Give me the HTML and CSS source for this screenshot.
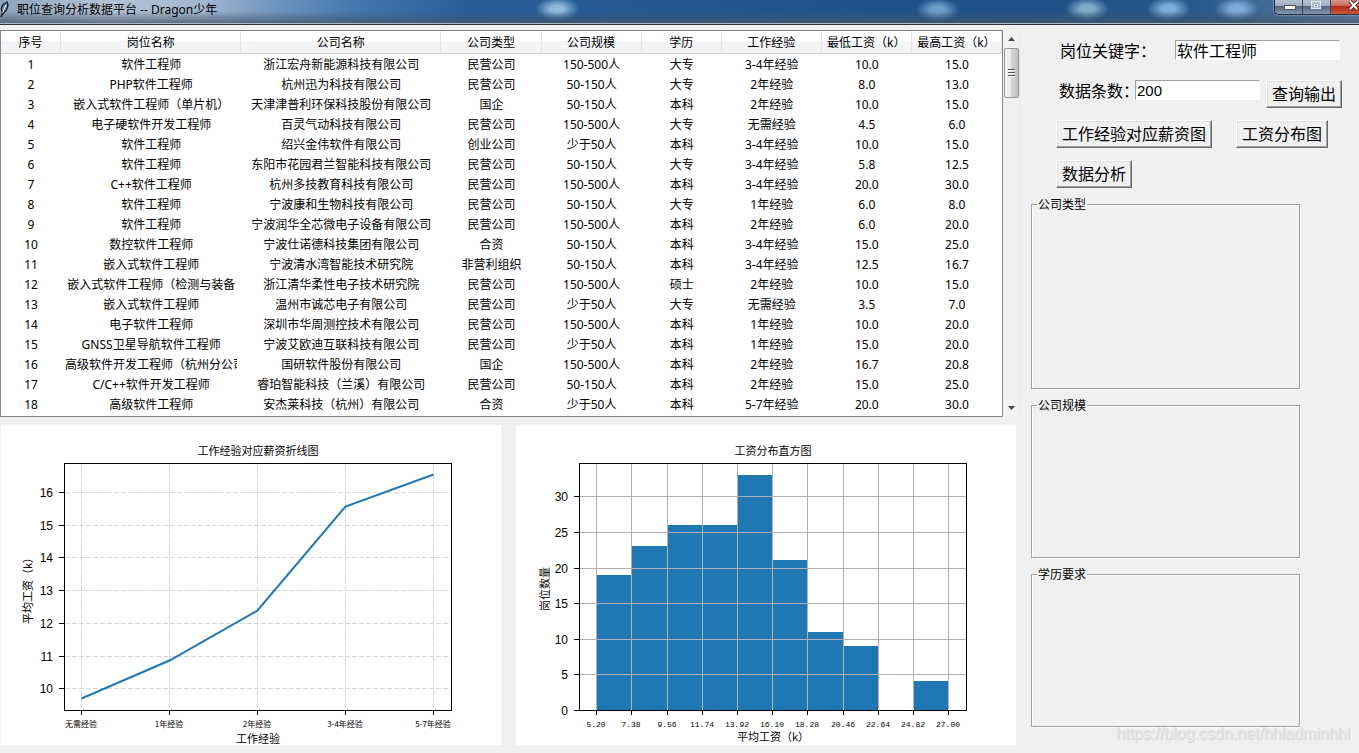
FILE: index.html
```
<!DOCTYPE html>
<html lang="zh-CN">
<head>
  <meta charset="UTF-8" />
  <meta name="viewport" content="width=device-width, initial-scale=1" />
  <title>职位查询分析数据平台 -- Dragon少年</title>
  <link rel="stylesheet" href="styles.css">
</head>
<body>

  <!-- 标题栏 -->
  <header class="titlebar">
    <svg class="feather" viewBox="0 0 10 18" aria-hidden="true">
      <path d="M1 17 L2.500 12 C0 9 2 4 7 2 C9 5 7.500 10 3.500 13 Z" fill="#5b8fc4" stroke="#111" stroke-width="1.200" />
      <path d="M2.500 13 L6 5" stroke="#fff" stroke-width="1" />
    </svg>
    <h1>职位查询分析数据平台 -- Dragon少年</h1>
    <div class="window-buttons">
      <button type="button" class="win-btn" aria-label="最小化">
        <svg viewBox="0 0 28 14"><rect x="9.500" y="5.500" width="11" height="4" fill="#fff" stroke="#4b5360" /></svg>
      </button>
      <button type="button" class="win-btn" aria-label="最大化">
        <svg viewBox="0 0 28 14"><rect x="8.500" y="1.500" width="9" height="7" fill="#aebccb" stroke="#dfe7ef" /><rect x="11.500" y="4.500" width="3" height="2" fill="#5b7695" stroke="#dfe7ef" /></svg>
      </button>
      <button type="button" class="win-btn close" aria-label="关闭">
        <svg viewBox="0 0 28 14"><path d="M19 1 L26 9 M27 1 L19 9" stroke="#4a2020" stroke-width="4" /><path d="M19 1 L26 9 M27 1 L19 9" stroke="#fff" stroke-width="2" /></svg>
      </button>
    </div>
  </header>

  <main class="app">
    <section class="left">

      <!-- 职位列表 -->
      <div class="list">
        <div class="table-box">
          <table>
            <colgroup>
              <col class="w60"><col class="w180"><col class="w200"><col class="w100"><col class="w100"><col class="w80"><col class="w100"><col class="w90"><col class="w90">
            </colgroup>
            <thead>
              <tr><th>序号</th><th>岗位名称</th><th>公司名称</th><th>公司类型</th><th>公司规模</th><th>学历</th><th>工作经验</th><th>最低工资（k）</th><th>最高工资（k）</th></tr>
            </thead>
            <tbody>
              <tr><td>1</td><td>软件工程师</td><td>浙江宏舟新能源科技有限公司</td><td>民营公司</td><td>150-500人</td><td>大专</td><td>3-4年经验</td><td>10.0</td><td>15.0</td></tr>
              <tr><td>2</td><td>PHP软件工程师</td><td>杭州迅为科技有限公司</td><td>民营公司</td><td>50-150人</td><td>大专</td><td>2年经验</td><td>8.0</td><td>13.0</td></tr>
              <tr><td>3</td><td>嵌入式软件工程师（单片机）</td><td>天津津普利环保科技股份有限公司</td><td>国企</td><td>50-150人</td><td>本科</td><td>2年经验</td><td>10.0</td><td>15.0</td></tr>
              <tr><td>4</td><td>电子硬软件开发工程师</td><td>百灵气动科技有限公司</td><td>民营公司</td><td>150-500人</td><td>大专</td><td>无需经验</td><td>4.5</td><td>6.0</td></tr>
              <tr><td>5</td><td>软件工程师</td><td>绍兴金伟软件有限公司</td><td>创业公司</td><td>少于50人</td><td>本科</td><td>3-4年经验</td><td>10.0</td><td>15.0</td></tr>
              <tr><td>6</td><td>软件工程师</td><td>东阳市花园君兰智能科技有限公司</td><td>民营公司</td><td>50-150人</td><td>大专</td><td>3-4年经验</td><td>5.8</td><td>12.5</td></tr>
              <tr><td>7</td><td>C++软件工程师</td><td>杭州多技教育科技有限公司</td><td>民营公司</td><td>150-500人</td><td>本科</td><td>3-4年经验</td><td>20.0</td><td>30.0</td></tr>
              <tr><td>8</td><td>软件工程师</td><td>宁波康和生物科技有限公司</td><td>民营公司</td><td>50-150人</td><td>大专</td><td>1年经验</td><td>6.0</td><td>8.0</td></tr>
              <tr><td>9</td><td>软件工程师</td><td>宁波润华全芯微电子设备有限公司</td><td>民营公司</td><td>150-500人</td><td>本科</td><td>2年经验</td><td>6.0</td><td>20.0</td></tr>
              <tr><td>10</td><td>数控软件工程师</td><td>宁波仕诺德科技集团有限公司</td><td>合资</td><td>50-150人</td><td>本科</td><td>3-4年经验</td><td>15.0</td><td>25.0</td></tr>
              <tr><td>11</td><td>嵌入式软件工程师</td><td>宁波清水湾智能技术研究院</td><td>非营利组织</td><td>50-150人</td><td>本科</td><td>3-4年经验</td><td>12.5</td><td>16.7</td></tr>
              <tr><td>12</td><td>嵌入式软件工程师（检测与装备</td><td>浙江清华柔性电子技术研究院</td><td>民营公司</td><td>150-500人</td><td>硕士</td><td>2年经验</td><td>10.0</td><td>15.0</td></tr>
              <tr><td>13</td><td>嵌入式软件工程师</td><td>温州市诚芯电子有限公司</td><td>民营公司</td><td>少于50人</td><td>大专</td><td>无需经验</td><td>3.5</td><td>7.0</td></tr>
              <tr><td>14</td><td>电子软件工程师</td><td>深圳市华周测控技术有限公司</td><td>民营公司</td><td>150-500人</td><td>本科</td><td>1年经验</td><td>10.0</td><td>20.0</td></tr>
              <tr><td>15</td><td>GNSS卫星导航软件工程师</td><td>宁波艾欧迪互联科技有限公司</td><td>民营公司</td><td>少于50人</td><td>本科</td><td>1年经验</td><td>15.0</td><td>20.0</td></tr>
              <tr><td>16</td><td>高级软件开发工程师（杭州分公司</td><td>国研软件股份有限公司</td><td>国企</td><td>150-500人</td><td>本科</td><td>2年经验</td><td>16.7</td><td>20.8</td></tr>
              <tr><td>17</td><td>C/C++软件开发工程师</td><td>睿珀智能科技（兰溪）有限公司</td><td>民营公司</td><td>50-150人</td><td>本科</td><td>2年经验</td><td>15.0</td><td>25.0</td></tr>
              <tr><td>18</td><td>高级软件工程师</td><td>安杰莱科技（杭州）有限公司</td><td>合资</td><td>少于50人</td><td>本科</td><td>5-7年经验</td><td>20.0</td><td>30.0</td></tr>
            </tbody>
          </table>
        </div>
        <div class="scrollbar">
          <button type="button" class="arrow" aria-label="向上滚动"><svg viewBox="0 0 7 4"><path d="M0 4 L3.500 0 L7 4 Z" fill="#444" /></svg></button>
          <div class="thumb"><i></i><i></i><i></i></div>
          <div class="track"></div>
          <button type="button" class="arrow" aria-label="向下滚动"><svg viewBox="0 0 7 4"><path d="M0 0 L3.500 4 L7 0 Z" fill="#444" /></svg></button>
        </div>
      </div>

      <!-- 图表 -->
      <div class="charts">
        <svg class="chart" viewBox="0 0 500 320" role="img" aria-label="工作经验对应薪资折线图">
          <text class="title" x="257" y="30">工作经验对应薪资折线图</text>
          <path class="grid dashed" d="M80.500 285V39 M168.500 285V39 M256.500 285V39 M344.500 285V39 M432.500 285V39 M64 67.500H450 M64 100.500H450 M64 132.500H450 M64 165.500H450 M64 198.500H450 M64 231.500H450 M64 263.500H450" />
          <polyline class="line" points="80.500,273.500 168.500,235.500 256.500,185.500 344.500,81.500 432.500,49.500" />
          <path class="axis" d="M63.500 38.500H450.500V285.500H63.500Z M80.500 286v4 M168.500 286v4 M256.500 286v4 M344.500 286v4 M432.500 286v4 M63 67.500h-5 M63 100.500h-5 M63 132.500h-5 M63 165.500h-5 M63 198.500h-5 M63 231.500h-5 M63 263.500h-5" />
          <g class="y-ticks">
            <text x="52" y="72">16</text>
            <text x="52" y="105">15</text>
            <text x="52" y="137">14</text>
            <text x="52" y="170">13</text>
            <text x="52" y="203">12</text>
            <text x="52" y="236">11</text>
            <text x="52" y="268">10</text>
          </g>
          <g class="x-ticks">
            <text x="80" y="302">无需经验</text>
            <text x="168" y="302">1年经验</text>
            <text x="256" y="302">2年经验</text>
            <text x="344" y="302">3-4年经验</text>
            <text x="432" y="302">5-7年经验</text>
          </g>
          <text class="title" x="257" y="318">工作经验</text>
          <text class="title" transform="translate(31 163) rotate(-90)">平均工资（k）</text>
        </svg>

        <svg class="chart" viewBox="0 0 500 320" role="img" aria-label="工资分布直方图">
          <text class="title" x="257" y="30">工资分布直方图</text>
          <path class="bars" d="M81 285V150H116V121H152V100H222V50H257V135H292V207H328V221H363V285Z M398 285V256H432V285Z" />
          <path class="grid" d="M80.500 285V39 M115.500 285V39 M151.500 285V39 M186.500 285V39 M221.500 285V39 M256.500 285V39 M291.500 285V39 M327.500 285V39 M362.500 285V39 M397.500 285V39 M432.500 285V39 M64 71.500H450 M64 107.500H450 M64 143.500H450 M64 178.500H450 M64 214.500H450 M64 249.500H450" />
          <path class="axis" d="M63.500 38.500H450.500V285.500H63.500Z M80.500 286v4 M115.500 286v4 M151.500 286v4 M186.500 286v4 M221.500 286v4 M256.500 286v4 M291.500 286v4 M327.500 286v4 M362.500 286v4 M397.500 286v4 M432.500 286v4 M63 71.500h-5 M63 107.500h-5 M63 143.500h-5 M63 178.500h-5 M63 214.500h-5 M63 249.500h-5 M63 285.500h-5" />
          <g class="y-ticks">
            <text x="52" y="76">30</text>
            <text x="52" y="112">25</text>
            <text x="52" y="148">20</text>
            <text x="52" y="183">15</text>
            <text x="52" y="219">10</text>
            <text x="52" y="254">5</text>
            <text x="52" y="290">0</text>
          </g>
          <g class="x-ticks mono">
            <text x="80" y="302">5.20</text>
            <text x="115" y="302">7.38</text>
            <text x="151" y="302">9.56</text>
            <text x="186" y="302">11.74</text>
            <text x="221" y="302">13.92</text>
            <text x="256" y="302">16.10</text>
            <text x="291" y="302">18.28</text>
            <text x="327" y="302">20.46</text>
            <text x="362" y="302">22.64</text>
            <text x="397" y="302">24.82</text>
            <text x="432" y="302">27.00</text>
          </g>
          <text class="title" x="257" y="316">平均工资（k）</text>
          <text class="title" transform="translate(33 164) rotate(-90)">岗位数量</text>
        </svg>
      </div>
    </section>

    <!-- 查询面板 -->
    <aside class="right">
      <form class="query">
        <div class="row">
          <label class="keyword-label" for="keyword">岗位关键字：</label>
          <input class="keyword" id="keyword" type="text" value="软件工程师">
        </div>
        <div class="row">
          <label class="count-label" for="count">数据条数：</label>
          <input class="count" id="count" type="text" value="200">
          <button class="tk-btn" type="button">查询输出</button>
        </div>
        <div class="row spaced">
          <button class="tk-btn" type="button">工作经验对应薪资图</button>
          <button class="tk-btn" type="button">工资分布图</button>
        </div>
        <div class="row">
          <button class="tk-btn" type="button">数据分析</button>
        </div>
      </form>

      <div class="groups">
        <fieldset class="tall"><legend>公司类型</legend></fieldset>
        <fieldset><legend>公司规模</legend></fieldset>
        <fieldset><legend>学历要求</legend></fieldset>
      </div>
    </aside>
  </main>

  <div class="watermark">https://blog.csdn.net/hhladminhhl</div>
</body>
</html>
```
FILE: styles.css
```
* {
  box-sizing: border-box;
}

body {
  margin: 0;
  position: relative;
  background: #f0f0f0;
  color: #000;
  font-family: "Noto Sans", "Noto Sans CJK SC", sans-serif;
  font-size: 12px;
}

/* 标题栏 */
.titlebar {
  display: flex;
  align-items: flex-start;
  height: 25px;
  border-bottom: 1px solid #2b3340;
  box-shadow: inset 0 -1px #a9b9ca;
  background:
    linear-gradient(to bottom, rgba(70, 85, 105, 0) 45%, rgba(70, 85, 105, 0.8)),
    radial-gradient(ellipse 22px 12px at 41% 9px, #8fb9dc 30%, transparent),
    radial-gradient(ellipse 22px 12px at 69% 10px, #6f9dcb 30%, transparent),
    radial-gradient(ellipse 22px 12px at 80% 9px, #82acc8 30%, transparent),
    radial-gradient(ellipse 22px 12px at 86% 9px, #7fabda 30%, transparent),
    radial-gradient(ellipse 22px 12px at 91% 9px, #7fabda 30%, transparent),
    linear-gradient(to right, #8ea5bd 0, #b3c3d4 8%, #a0b6ce 15%, #7196bf 20%, #4677ae 26%, #285f9a 34%, #24568f 50%, #1f4f86 75%, #27578c 88%, #6482a3 100%);
}

.feather {
  width: 10px;
  height: 18px;
}

.titlebar h1 {
  flex: 1;
  margin: 0;
  padding-left: 7px;
  font-size: 12px;
  font-weight: normal;
  line-height: 20px;
}

.window-buttons {
  display: flex;
  height: 15px;
  border: 1px solid #27303d;
  border-top: 0;
  border-right: 0;
  border-radius: 0 0 0 5px;
  overflow: hidden;
  box-shadow: 0 0 2px #c9d6e4;
}

.win-btn {
  width: 28px;
  padding: 0;
  border: 0;
  border-right: 1px solid #3a4656;
  background: linear-gradient(to bottom, #b4c1cf 0, #9fafc1 40%, #52677f 45%, #8297ad);
}

.win-btn.close {
  border-right: 0;
  background: linear-gradient(to bottom, #d99a8e 0, #cc6a58 40%, #b02d16 45%, #c9573c);
}

.win-btn svg {
  display: block;
  width: 28px;
  height: 14px;
}

/* 主体 */
.app {
  display: flex;
  padding: 5px 0 8px;
}

.left {
  flex: 1;
  min-width: 0;
}

.list {
  display: flex;
}

.table-box {
  flex: 1;
  min-width: 0;
  padding-bottom: 2px;
  border: 1px solid #828790;
  background: #fff;
}

table {
  width: 100%;
  table-layout: fixed;
  border-collapse: separate;
  border-spacing: 0;
}

.w60 { width: 60px; }
.w80 { width: 80px; }
.w90 { width: 90px; }
.w100 { width: 100px; }
.w180 { width: 180px; }
.w200 { width: 200px; }

th {
  height: 23px;
  padding: 2px 0 0;
  border-right: 1px solid #e2e3e5;
  border-bottom: 1px solid #d5d5d5;
  background: linear-gradient(to bottom, #fff 45%, #f5f6f8 45%, #f1f2f4);
  font-weight: normal;
  line-height: 20px;
  white-space: nowrap;
}

td {
  height: 20px;
  padding: 2px 0 0;
  border: 0 solid transparent;
  border-width: 0 4px;
  overflow: hidden;
  line-height: 18px;
  text-align: center;
  white-space: nowrap;
}

.scrollbar {
  display: flex;
  flex-direction: column;
  width: 17px;
  padding: 0 0 0 1px;
  border-right: 1px solid #e7e7e7;
}

.arrow {
  height: 18px;
  padding: 0;
  border: 0;
  background: #f2f2f2;
  line-height: 0;
}

.arrow svg {
  width: 7px;
  height: 4px;
}

.thumb {
  display: flex;
  flex-direction: column;
  align-items: center;
  justify-content: center;
  gap: 1px;
  height: 50px;
  border: 1px solid #979797;
  border-radius: 2px;
  background: linear-gradient(to right, #f5f5f5, #e9e9e9 45%, #d4d4d4 50%, #c2c2c2);
}

.thumb i {
  width: 7px;
  height: 2px;
  border-top: 1px solid #555;
  background: #fff;
}

.track {
  flex: 1;
}

.charts {
  display: flex;
  gap: 15px;
  padding: 8px 4px 0 1px;
}

.chart {
  flex: 1;
  min-width: 0;
  background: #fff;
  font-family: "Noto Sans CJK SC", sans-serif;
}

.chart text {
  text-anchor: middle;
}

.chart .title {
  font-size: 11px;
}

.chart .y-ticks text {
  font-family: "Liberation Sans", sans-serif;
  font-size: 12px;
  text-anchor: end;
}

.x-ticks {
  font-size: 8px;
}

.mono {
  font-family: "Liberation Mono", monospace;
}

.axis {
  fill: none;
  stroke: #000;
  shape-rendering: crispEdges;
}

.grid {
  fill: none;
  stroke: #b0b0b0;
  shape-rendering: crispEdges;
}

.dashed {
  stroke: #d7d7d7;
  stroke-dasharray: 5 2;
}

.line {
  fill: none;
  stroke: #1f77b4;
  stroke-width: 2;
}

.bars {
  fill: #1f77b4;
}

/* 查询面板 */
.right {
  width: 339px;
  padding: 10px 16px 0 11px;
}

.query {
  display: flex;
  flex-direction: column;
  gap: 12px;
  padding-left: 25px;
  font-family: "Noto Sans CJK SC", sans-serif;
  font-size: 16px;
}

.row {
  display: flex;
  align-items: flex-start;
  height: 28px;
}

.row.spaced {
  gap: 24px;
}

.row label {
  line-height: 20px;
  white-space: nowrap;
}

.keyword-label {
  flex: 0 0 119px;
  padding-left: 4px;
}

.count-label {
  flex: 0 0 79px;
  padding-left: 3px;
}

.row input {
  height: 20px;
  padding: 0 1px;
  border: 1px solid #fff;
  border-top-color: #a0a0a0;
  border-left-color: #a0a0a0;
  background: #fff;
  color: #000;
  font-family: "Liberation Sans", "Noto Sans CJK SC", sans-serif;
  font-size: 16px;
  line-height: 18px;
}

.keyword {
  width: 165px;
}

.row .count {
  width: 125px;
  margin-right: 6px;
  font-size: 15px;
}

.row .count-label {
  flex-basis: 79px;
  margin-right: -4px;
}

.tk-btn {
  height: 28px;
  padding: 0 5px 2px;
  border: 1px solid #fff;
  border-right-color: #696969;
  border-bottom-color: #696969;
  box-shadow: inset -1px -1px #a0a0a0, inset 1px 1px #e3e3e3;
  background: #f0f0f0;
  color: #000;
  font-family: inherit;
  font-size: 16px;
  line-height: 24px;
  white-space: nowrap;
}

.groups {
  display: flex;
  flex-direction: column;
  gap: 7px;
  width: 269px;
  padding-top: 7px;
}

fieldset {
  height: 162px;
  margin: 0;
  padding: 0 5px;
  border: 1px solid #a0a0a0;
  box-shadow: 1px 1px #fff, inset 1px 1px #fff;
}

fieldset.tall {
  height: 194px;
}

legend {
  padding: 2px 1px 0;
  background: #f0f0f0;
  line-height: 16px;
}

.watermark {
  position: absolute;
  right: 9px;
  bottom: 9px;
  color: #e6e6e6;
  font-family: "Liberation Sans", sans-serif;
  font-size: 16px;
  line-height: 20px;
  text-shadow: 1px 1px 1px #d0d0d0;
}
```
